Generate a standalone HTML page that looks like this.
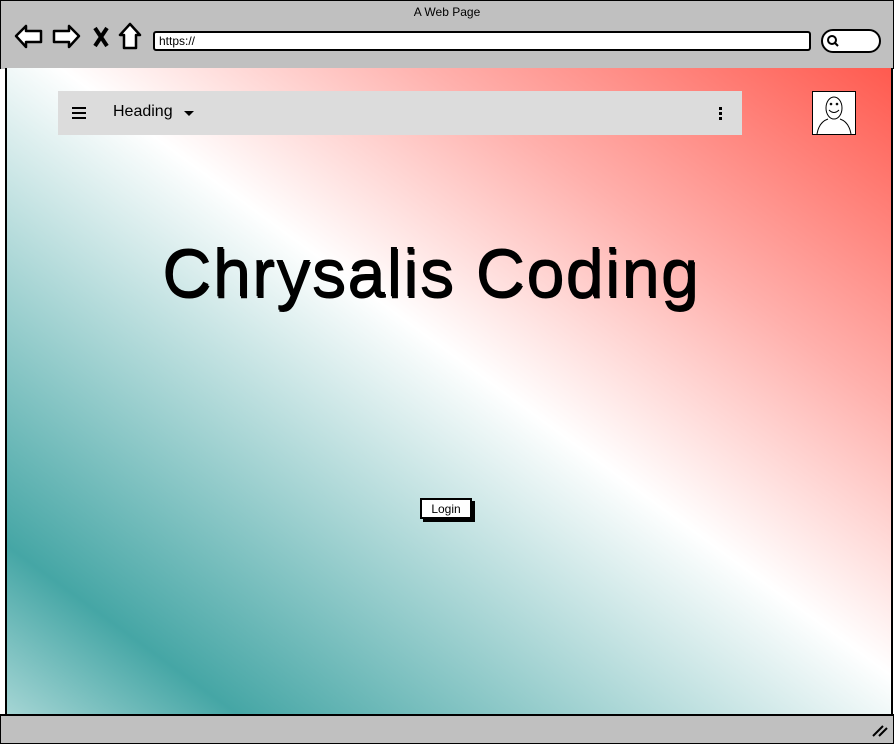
<!DOCTYPE html>
<html><head><style>
body{margin:0;width:894px;height:742px;background:#fff;position:relative;overflow:hidden;font-family:"Liberation Sans",sans-serif}
.top{position:absolute;left:0;top:0;width:892px;height:68px;background:#c0c0c0;border:1px solid #000;border-bottom:none}
.main{position:absolute;left:5px;top:68px;width:884px;height:646px;background:linear-gradient(to top right,#a5d5d4 0%,#45a6a5 13%,#fff 53%,#ffb0ac 74%,#ff5a4f 100%);border-left:2px solid #000;border-right:2px solid #000}
.bot{position:absolute;left:0;top:714px;width:892px;height:27px;background:#c0c0c0;border:1px solid #000;border-top:2px solid #000}
.url{position:absolute;left:153px;top:31px;width:650px;height:16px;background:#fff;border:2px solid #000;border-radius:3px;font-size:12px;line-height:16px;padding-left:4px;box-sizing:content-box}
.search{position:absolute;left:821px;top:29px;width:56px;height:20px;background:#fff;border:2px solid #000;border-radius:12px}
.nav{position:absolute;left:58px;top:91px;width:684px;height:44px;background:#dcdcdc}
.avatar{position:absolute;left:812px;top:91px;width:42px;height:42px;background:#fff;border:1px solid #000}
h1{position:absolute;left:0;width:862px;text-align:center;top:234px;margin:0;font-weight:normal;font-size:68px;color:#000;text-shadow:1px 2px 0 #000;letter-spacing:1.5px}
.btn{position:absolute;left:420px;top:498px;width:52px;height:21px;background:#fff;border:2px solid #000;box-shadow:3px 3px 0 #000;font-size:12px;text-align:center;line-height:18px;box-sizing:border-box}
</style></head><body>
<div class="top">
<div style="position:absolute;top:4px;width:100%;text-align:center;font-size:12px">A Web Page</div>
<svg style="position:absolute;left:12px;top:20px" width="135" height="32"><g fill="#fff" stroke="#000" stroke-width="2.5" stroke-linejoin="round">
<path d="M3 15 L13 5 L13 10 L28 10 L28 21 L13 21 L13 26 Z"/>
<path d="M66 15 L56 5 L56 10 L41 10 L41 21 L56 21 L56 26 Z"/>
<path d="M117 3 L107 14 L111 14 L111 27 L123 27 L123 14 L127 14 Z"/></g>
<path d="M82 7 L94 25 M94 7 L82 25" stroke="#000" stroke-width="4"/></svg>
</div>
<div class="url">https://</div>
<div class="search"><svg width="20" height="20"><circle cx="9" cy="9" r="4" fill="none" stroke="#000" stroke-width="2"/><path d="M12 12 L15 15" stroke="#000" stroke-width="2"/></svg></div>
<div class="main"></div>
<div class="nav">
<div style="position:absolute;left:14px;top:16px;width:14px;height:2px;background:#000;box-shadow:0 5px 0 #000,0 10px 0 #000"></div>
<div style="position:absolute;left:55px;top:12px;font-size:16px">Heading</div>
<div style="position:absolute;left:126px;top:20px;border:5px solid transparent;border-top:5px solid #000"></div>
<div style="position:absolute;left:661px;top:16px;width:3px;height:3px;background:#000;box-shadow:0 5px 0 #000,0 10px 0 #000"></div>
</div>
<div class="avatar"><svg width="42" height="42"><g fill="none" stroke="#000"><ellipse cx="21" cy="16" rx="8" ry="11"/><path d="M4 42 Q6 30 15 27 M38 42 Q36 30 27 27"/><circle cx="18" cy="12" r=".8"/><circle cx="24" cy="12" r=".8"/><path d="M16 18 Q21 23 26 18"/></g></svg></div>
<h1>Chrysalis Coding</h1>
<div class="btn">Login</div>
<div class="bot"><svg style="position:absolute;left:870px;top:6px" width="18" height="16"><path d="M2 14 L12 4 M8 14 L16 6" stroke="#000" stroke-width="2"/></svg></div>
</body></html>
